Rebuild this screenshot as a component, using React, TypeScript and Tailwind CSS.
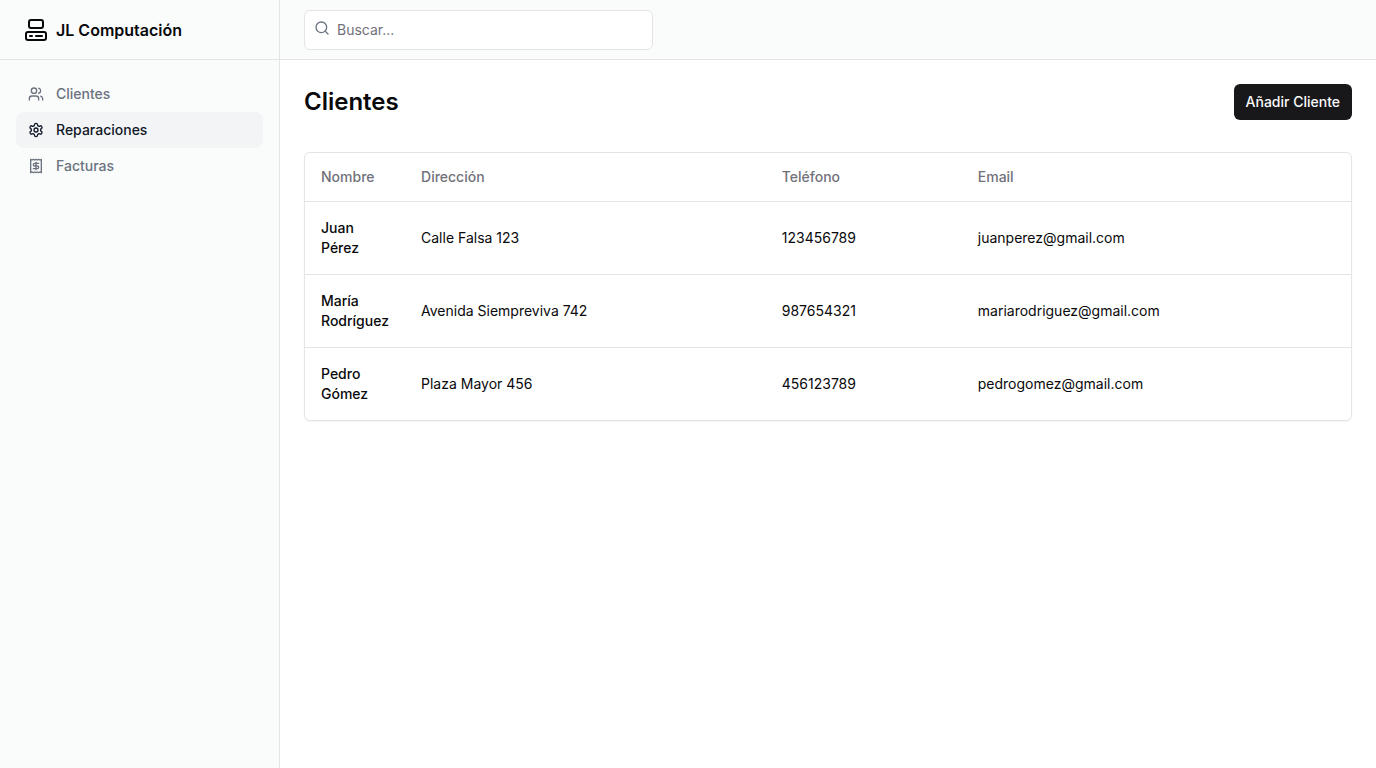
import React from "react";
import { Computer, Receipt, Search, Users } from "lucide-react";

const clients = [
  { name: "Juan Pérez", address: "Calle Falsa 123", phone: "123456789", email: "juanperez@gmail.com" },
  { name: "María Rodríguez", address: "Avenida Siempreviva 742", phone: "987654321", email: "mariarodriguez@gmail.com" },
  { name: "Pedro Gómez", address: "Plaza Mayor 456", phone: "456123789", email: "pedrogomez@gmail.com" },
];

const navItem = "flex items-center gap-3 rounded-lg px-3 py-2";

function GearIcon({ className }: { className?: string }) {
  return (
    <svg
      viewBox="0 0 24 24"
      fill="none"
      stroke="currentColor"
      strokeWidth="2"
      strokeLinecap="round"
      strokeLinejoin="round"
      className={className}
      aria-hidden="true"
    >
      <path d="M12.22 2h-.44a2 2 0 0 0-2 2v.18a2 2 0 0 1-1 1.73l-.43.25a2 2 0 0 1-2 0l-.15-.08a2 2 0 0 0-2.73.73l-.22.38a2 2 0 0 0 .73 2.73l.15.1a2 2 0 0 1 1 1.72v.51a2 2 0 0 1-1 1.74l-.15.09a2 2 0 0 0-.73 2.73l.22.38a2 2 0 0 0 2.73.73l.15-.08a2 2 0 0 1 2 0l.43.25a2 2 0 0 1 1 1.73V20a2 2 0 0 0 2 2h.44a2 2 0 0 0 2-2v-.18a2 2 0 0 1 1-1.73l.43-.25a2 2 0 0 1 2 0l.15.08a2 2 0 0 0 2.73-.73l.22-.39a2 2 0 0 0-.73-2.73l-.15-.08a2 2 0 0 1-1-1.74v-.5a2 2 0 0 1 1-1.74l.15-.09a2 2 0 0 0 .73-2.73l-.22-.38a2 2 0 0 0-2.73-.73l-.15.08a2 2 0 0 1-2 0l-.43-.25a2 2 0 0 1-1-1.73V4a2 2 0 0 0-2-2z" />
      <circle cx="12" cy="12" r="3" />
    </svg>
  );
}

export default function App() {
  return (
    <div className="grid min-h-screen w-full grid-cols-[280px_1fr] bg-white font-['Inter',sans-serif] text-[#09090b]">
      <aside className="border-r border-[#e4e4e7] bg-[#fafcfb]">
        <div className="flex h-[60px] items-center border-b border-[#e4e4e7] px-6">
          <a href="#" className="flex items-center gap-2 font-semibold">
            <Computer className="size-6" />
            <span>JL Computación</span>
          </a>
        </div>
        <nav className="flex flex-col px-4 py-4 text-sm font-medium">
          <a href="#clientes" className={`${navItem} text-[#6b7280]`}>
            <Users className="size-4" />
            Clientes
          </a>
          <a href="#reparaciones" className={`${navItem} bg-[#f3f4f6] text-[#111827]`}>
            <GearIcon className="size-4" />
            Reparaciones
          </a>
          <a href="#facturas" className={`${navItem} text-[#6b7280]`}>
            <Receipt className="size-4" />
            Facturas
          </a>
        </nav>
      </aside>
      <div className="flex min-w-0 flex-col">
        <header className="flex h-[60px] items-center border-b border-[#e4e4e7] bg-[#fafcfb] px-6">
          <form className="relative w-1/3">
            <Search className="absolute top-2.5 left-2.5 size-4 text-[#6b7280]" />
            <input
              type="search"
              aria-label="Buscar"
              placeholder="Buscar..."
              className="h-10 w-full rounded-md border border-[#e4e4e7] bg-white px-8 text-sm placeholder:text-[#71717a]"
            />
          </form>
        </header>
        <main className="flex flex-col gap-8 p-6">
          <div className="flex items-center justify-between">
            <h1 className="text-2xl font-semibold">Clientes</h1>
            <button type="button" className="h-9 rounded-md bg-[#18181b] px-3 text-sm font-medium text-[#fafafa]">
              Añadir Cliente
            </button>
          </div>
          <div className="rounded-md border border-[#e4e4e7] shadow-xs">
            <table className="w-full text-left text-sm">
              <thead>
                <tr className="h-12 border-b border-[#e4e4e7] text-[#71717a]">
                  <th className="w-[100px] px-4 font-medium">Nombre</th>
                  <th className="px-4 font-medium">Dirección</th>
                  <th className="w-[196px] px-4 font-medium">Teléfono</th>
                  <th className="px-4 font-medium">Email</th>
                </tr>
              </thead>
              <tbody>
                {clients.map((client) => (
                  <tr key={client.email} className="border-b border-[#e4e4e7] last:border-0">
                    <td className="p-4 font-medium">{client.name}</td>
                    <td className="p-4">{client.address}</td>
                    <td className="p-4">{client.phone}</td>
                    <td className="p-4">{client.email}</td>
                  </tr>
                ))}
              </tbody>
            </table>
          </div>
        </main>
      </div>
    </div>
  );
}
